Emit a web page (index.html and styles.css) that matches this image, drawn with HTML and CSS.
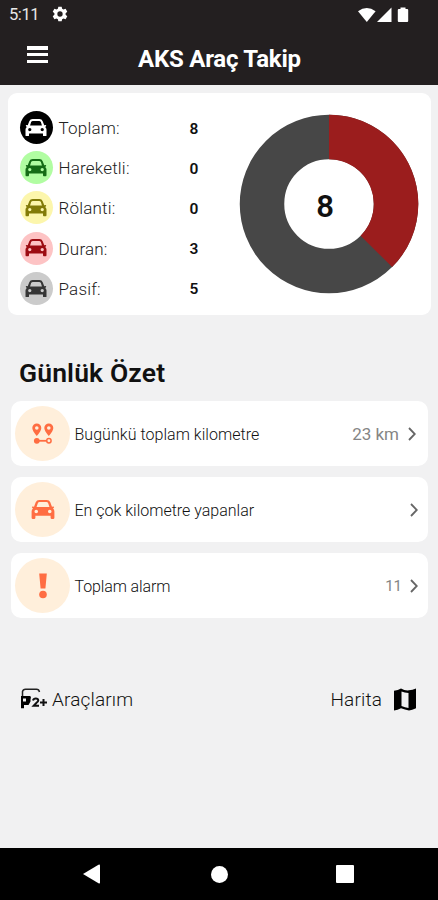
FILE: index.html
```html
<!DOCTYPE html>
<html lang="tr">
<head>
<meta charset="utf-8">
<title>AKS Araç Takip</title>
<link rel="stylesheet" href="styles.css">
</head>
<body>
<svg class="defs" aria-hidden="true">
  <symbol id="car" viewBox="0 0 22 18">
    <path fill-rule="evenodd" d="M7.500 0h7Q17 0 17.900 2.200l1.600 4.200 1.300-.2q.9.200.6 1l-.9.900q1.300 1 1.300 2.700v5.900q0 1.300-1.300 1.300h-1q-1.300 0-1.300-1.300v-1.700H3.800v1.700Q3.800 18 2.500 18h-1Q.2 18 .2 16.700v-5.900q0-1.700 1.300-2.700l-.9-.9q-.3-.8.6-1l1.300.2 1.600-4.200Q5 0 7.500 0zM7.800 2q-1.300 0-1.800 1.200L4.900 6.700h12.200L16 3.200Q15.500 2 14.200 2zM4.600 9.200a1.700 1.700 0 1 0 0 3.400a1.700 1.700 0 1 0 0-3.400zM17.400 9.200a1.700 1.700 0 1 0 0 3.400a1.700 1.700 0 1 0 0-3.400z"/>
  </symbol>
  <symbol id="chevron" viewBox="0 0 8 14">
    <path d="M1 1l5.800 6L1 13" fill="none" stroke="#666" stroke-width="1.800"/>
  </symbol>
</svg>
<header class="header">
  <div class="status">
    <span class="clock">5:11</span>
    <svg class="gear" viewBox="0 0 24 24"><path fill="#fff" fill-rule="evenodd" d="M9.500 1h5l.7 3.300 2 1.100 3.200-1.100 2.500 4.300-2.500 2.200v2.400l2.500 2.200-2.500 4.300-3.200-1.100-2 1.100-.7 3.300h-5l-.7-3.300-2-1.100-3.200 1.100L1.100 15.400l2.500-2.200v-2.400L1.100 8.600l2.500-4.300 3.200 1.100 2-1.100zM12 8a4 4 0 1 0 0 8a4 4 0 1 0 0-8z"/></svg>
    <svg class="signals" viewBox="0 0 52 18"><g fill="#fff"><path d="M0 4.200Q8.800-2.400 17.600 4.200L8.800 15z"/><path d="M33.500.5V15H19z"/><path d="M42.500.5h5V2h1.700q1 0 1 1v11q0 1-1 1h-8.400q-1 0-1-1V3q0-1 1-1h1.700z"/></g></svg>
  </div>
  <div class="toolbar">
    <div class="burger"><i></i><i></i><i></i></div>
    <h1>AKS Araç Takip</h1>
  </div>
</header>
<main>
  <section class="summary">
    <ul class="legend">
      <li class="total"><span class="dot"><svg><use href="#car"/></svg></span><span class="name">Toplam:</span><b>8</b></li>
      <li class="moving"><span class="dot"><svg><use href="#car"/></svg></span><span class="name">Hareketli:</span><b>0</b></li>
      <li class="idle"><span class="dot"><svg><use href="#car"/></svg></span><span class="name">Rölanti:</span><b>0</b></li>
      <li class="stopped"><span class="dot"><svg><use href="#car"/></svg></span><span class="name">Duran:</span><b>3</b></li>
      <li class="passive"><span class="dot"><svg><use href="#car"/></svg></span><span class="name">Pasif:</span><b>5</b></li>
    </ul>
    <div class="donut">
      <svg viewBox="0 0 180 180"><circle cx="90" cy="90" r="67" fill="none" stroke="#474747" stroke-width="44.500"/><path d="M90 23A67 67 0 0 1 137.380 137.380" fill="none" stroke="#9b1d1d" stroke-width="44.500"/></svg>
      <span>8</span>
    </div>
  </section>
  <h2>Günlük Özet</h2>
  <section class="list">
    <div class="item">
      <span class="badge"><svg width="22" height="22" viewBox="0 0 22 22"><path fill="#ff6d42" fill-rule="evenodd" d="M4.800.5a4.500 4.500 0 0 1 4.500 4.500q0 2.800-4.500 8Q.3 7.800.3 5A4.500 4.500 0 0 1 4.800.5zm0 2.700a1.800 1.800 0 1 0 0 3.600a1.800 1.800 0 1 0 0-3.600zM16.800.5a4.500 4.500 0 0 1 4.500 4.500q0 2.800-4.500 8-4.500-5.200-4.500-8A4.500 4.500 0 0 1 16.800.5zm0 2.700a1.800 1.800 0 1 0 0 3.600a1.800 1.800 0 1 0 0-3.600z"/><circle cx="4.800" cy="17.800" r="2.900" fill="#ff6d42"/><path d="M5 17.800h9.500" stroke="#ff6d42" stroke-width="1.800"/><circle cx="16.900" cy="17.800" r="2.200" fill="none" stroke="#ff6d42" stroke-width="1.500"/></svg></span>
      <span class="label km">Bugünkü toplam kilometre</span><span class="value">23 km</span><svg class="chev first"><use href="#chevron"/></svg>
    </div>
    <div class="item">
      <span class="badge"><svg width="24" height="19"><use href="#car"/></svg></span>
      <span class="label most">En çok kilometre yapanlar</span><svg class="chev"><use href="#chevron"/></svg>
    </div>
    <div class="item">
      <span class="badge"><svg width="10" height="26" viewBox="0 0 10 26"><path d="M1.200.5h7.600L7.400 15.500H2.600z"/><circle cx="5" cy="21.500" r="3.800"/></svg></span>
      <span class="label alarm">Toplam alarm</span><span class="value small">11</span><svg class="chev"><use href="#chevron"/></svg>
    </div>
  </section>
  <nav class="links">
    <a class="cars"><svg width="28" height="22" viewBox="0 0 28 22"><path d="M2.500 8.500V3.500Q3 1.200 5.500 1.200h11q2.500 0 3 2.800" fill="none" stroke="#222" stroke-width="1.500"/><path fill-rule="evenodd" d="M1 8h9.500v5.500l-2 3.500H4v3.300H1zM3 10.500v3h3v-3z"/><path d="M10 8.800l-3 7" stroke="#000" stroke-width="2"/><path d="M13 12.500q.5-2 2.800-2t2.500 1.800q0 1.200-1.800 2.500l-2.800 2.900h5.300M20 14.500h7M23.500 11v7" fill="none" stroke="#111" stroke-width="2"/></svg><span>Araçlarım</span></a>
    <a class="map"><span>Harita</span><svg width="22" height="23" viewBox="0 0 22 23"><path fill-rule="evenodd" d="M0 2.700Q4 2.300 7 .5q4 2.300 8 1.800 3.500 0 7-1.800v19.800q-4 2-7 2.200-4-.7-8-2.200-3.500 2-7 2.200zM7.500 3.500v14.500q3.500 1.700 7 2V5q-4-.2-7-1.500z"/></svg></a>
  </nav>
</main>
<footer class="navbar">
  <svg width="18" height="20" viewBox="0 0 18 20"><path fill="#fff" d="M0 10L15.500.8Q17 0 17 1.500v17q0 1.500-1.500.7z"/></svg>
  <i class="home"></i>
  <i class="recent"></i>
</footer>
</body>
</html>
```
FILE: styles.css
```css
* { box-sizing: border-box; }
body {
  margin: 0;
  width: 438px;
  height: 900px;
  display: flex;
  flex-direction: column;
  overflow: hidden;
  background: #f1f1f2;
  color: #111;
  font-family: Roboto, "Liberation Sans", sans-serif;
}
svg { display: block; flex: none; }
.defs { position: absolute; width: 0; height: 0; }
.header { height: 84.500px; background: #231f20; color: #fff; flex: none; }
.status { height: 29px; display: flex; align-items: center; padding-left: 9px; }
.clock { width: 43px; font-size: 16.500px; letter-spacing: -.4px; color: #e8e8e8; }
.gear { width: 16px; height: 16px; margin-top: -1px; }
.signals { width: 52px; height: 18px; margin: 2px 0 0 290px; }
.toolbar { display: flex; padding-left: 27px; }
.burger { width: 21px; height: 17px; margin-top: 17px; display: flex; flex-direction: column; justify-content: space-between; }
.burger i { height: 3.500px; background: #fff; }
h1 { margin: 15px 0 0 90px; font-size: 24px; line-height: 30px; font-weight: 700; white-space: nowrap; letter-spacing: -.22px; }
main { flex: 1; padding-top: 8.500px; }
.summary { margin-left: 8px; width: 423px; height: 222px; border-radius: 9px; background: #fff; display: flex; }
.legend { list-style: none; margin: 0; padding: 14.500px 0 0 11.500px; width: 231px; }
.legend li { height: 40.200px; display: flex; align-items: center; }
.dot { width: 33px; height: 33px; border-radius: 50%; display: flex; align-items: center; justify-content: center; }
.dot svg { width: 22px; height: 17.500px; }
.name { margin-left: 6px; width: 131px; font-size: 17px; font-weight: 300; padding-top: 1px; letter-spacing: .2px; color: #222; }
.legend b { font-size: 15.500px; font-weight: 600; padding-top: 2px; }
.total .dot { background: #000; fill: #fff; }
.moving .dot { background: #b1fda2; fill: #156c16; }
.idle .dot { background: #fcf6ac; fill: #827b08; }
.stopped .dot { background: #fdc3c4; fill: #9c0c12; }
.passive .dot { background: #cbcbcb; fill: #363636; }
.donut { width: 180px; height: 180px; margin-top: 21px; display: grid; }
.donut > * { grid-area: 1 / 1; }
.donut span { place-self: center; font-size: 31px; font-weight: 600; margin: 4px 8px 0 0; }
h2 { margin: 41px 0 0 19px; font-size: 26.500px; line-height: 34px; font-weight: 600; letter-spacing: .15px; }
.list { margin: 11px 10px 0 11px; display: flex; flex-direction: column; gap: 11px; }
.item { height: 65px; border-radius: 10px; background: #fff; display: flex; align-items: center; padding: 0 10px 0 4px; }
.badge { width: 55px; height: 55px; border-radius: 50%; background: #ffefdb; fill: #ff6d42; display: flex; align-items: center; justify-content: center; }
.label { flex: 1; margin-left: 4.500px; padding-top: 2px; font-size: 16px; font-weight: 300; color: #111; white-space: nowrap; }
.km { letter-spacing: .04px; }
.alarm { letter-spacing: -.12px; }
.value { font-size: 17px; color: #858585; padding-top: 1px; margin-right: 9px; }
.value.small { font-size: 15px; margin-right: 8px; }
.chev { width: 8px; height: 14px; }
.chev.first { margin-right: 2px; }
.links { display: flex; justify-content: space-between; align-items: center; margin-top: 66px; padding: 0 22px 0 20px; height: 30px; font-size: 19px; font-weight: 300; letter-spacing: .15px; }
.links a { display: flex; align-items: center; }
.cars { gap: 4px; }
.map { gap: 12px; }
.navbar { height: 52px; flex: none; background: #000; display: flex; align-items: center; padding-left: 83px; }
.home { width: 17px; height: 17px; border-radius: 50%; background: #fff; margin-left: 110px; }
.recent { width: 18px; height: 18px; border-radius: 1px; background: #fff; margin-left: 108px; }
```
